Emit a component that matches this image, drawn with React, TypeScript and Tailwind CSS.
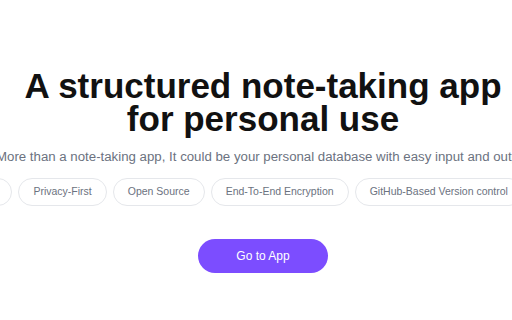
import React from "react";

const tags = [
  "Markdown-Supported",
  "Privacy-First",
  "Open Source",
  "End-To-End Encryption",
  "GitHub-Based Version control",
  "Plain Text Storage",
];

export default function App() {
  return (
    <main
      className="w-[512px] h-[320px] overflow-hidden bg-white flex flex-col items-center pt-[69px] pl-[14px]"
      style={{ fontFamily: '"Liberation Sans", Arial, sans-serif' }}
    >
      {/* Hero title */}
      <h1 className="text-[35px] leading-[33px] font-bold text-[#111111] text-center whitespace-nowrap">
        A structured note-taking app
        <br />
        for personal use
      </h1>

      <p className="mt-[12px] text-[13.25px] leading-[20px] text-[#6b7280] whitespace-nowrap">
        More than a note-taking app, It could be your personal database with easy input and output
      </p>

      {/* Feature tags */}
      <div className="mt-[11px] flex justify-center gap-[6px] whitespace-nowrap">
        {tags.map((t) => (
          <span
            key={t}
            className="h-[28px] px-[14px] flex items-center rounded-full border border-[#e5e7eb] text-[10.5px] text-[#6b7280]"
          >
            {t}
          </span>
        ))}
      </div>

      <button className="mt-[33px] w-[130px] h-[34px] rounded-full bg-[#7c4dff] text-white text-[12px] font-medium">
        Go to App
      </button>
    </main>
  );
}
